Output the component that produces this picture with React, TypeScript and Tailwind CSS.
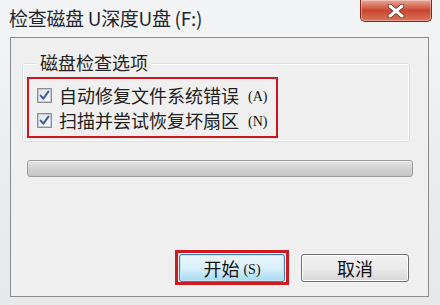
import React from "react";

const Check = () => (
  <div className="w-[15px] h-[15px] border border-[#8e8f8f] bg-gradient-to-br from-[#dcdcdc] to-[#f8f8f8] flex items-center justify-center shrink-0">
    <div className="w-[13px] h-[13px] border border-[#c4c8d0] bg-gradient-to-br from-[#e2e4ec] to-[#fbfbfd] flex items-center justify-center">
      <svg width="11" height="11" viewBox="0 0 11 11">
        <path d="M1.6 5.6 L4.3 8.7 L9.4 1.6" fill="none" stroke="#3e5b9c" strokeWidth="2" strokeLinecap="round" strokeLinejoin="round" />
      </svg>
    </div>
  </div>
);

export default function App() {
  const cjk = { fontFamily: '"Noto Sans CJK SC", "Noto Sans", sans-serif' };
  const serif = { fontFamily: '"Liberation Serif", "DejaVu Serif", serif' };
  return (
    <div
      className="w-[440px] h-[305px] overflow-hidden flex flex-col bg-gradient-to-b from-[#f4f5f6] via-[#ebedef] to-[#e6e8ea] text-[#1a1a1a]"
      style={cjk}
    >
      {/* title bar */}
      <div className="h-[37px] flex items-start justify-between">
        <div className="pl-[9px] pt-[7px] text-[19px] leading-[22px] text-[#1e2530] tracking-[-0.3px]">
          检查磁盘 U深度U盘 (F:)
        </div>
        <div className="mr-[8px] w-[72px] h-[22px] rounded-b-[5px] border border-t-0 border-[#7a2a1c] bg-gradient-to-b from-[#e9a596] via-[#c9452e] to-[#d9745b] flex items-center justify-center shadow-[inset_0_0_0_1px_rgba(255,255,255,0.35)]">
          <svg width="18" height="14" viewBox="0 0 18 14">
            <path d="M3 2 L15 12 M15 2 L3 12" stroke="#6b2a20" strokeWidth="4.6" strokeLinecap="round" />
            <path d="M3 2 L15 12 M15 2 L3 12" stroke="#ffffff" strokeWidth="3" strokeLinecap="round" />
          </svg>
        </div>
      </div>

      {/* client panel */}
      <div className="ml-[10px] mr-[11px] h-[260px] border border-[#8b8b8b] bg-[#f0f0f0] flex flex-col">
        {/* group box */}
        <div className="relative ml-[11px] mr-[18px] mt-[25px] h-[79px] rounded-[3px] border border-[#d5dfe5] shadow-[inset_0_0_0_1px_#ffffff]">
          <div className="absolute left-[13px] top-[-13px] px-[4px] bg-[#f0f0f0] text-[18px] leading-[22px] text-[#222]">
            磁盘检查选项
          </div>
          <div className="ml-[4px] mt-[13px] w-[251px] h-[61px] border-2 border-[#d0171f] flex flex-col justify-center gap-[7px] pl-[8px]">
            <div className="flex items-center gap-[7px] h-[18px]">
              <Check />
              <span className="text-[18px] leading-[18px] text-[#202020]">自动修复文件系统错误</span>
              <span className="text-[14px] leading-[18px] ml-[2px] text-[#111] translate-y-[2px]" style={serif}>(A)</span>
            </div>
            <div className="flex items-center gap-[7px] h-[18px]">
              <Check />
              <span className="text-[18px] leading-[18px] text-[#202020]">扫描并尝试恢复坏扇区</span>
              <span className="text-[14px] leading-[18px] ml-[2px] text-[#111] translate-y-[2px]" style={serif}>(N)</span>
            </div>
          </div>
        </div>

        {/* progress bar */}
        <div className="ml-[16px] mr-[15px] mt-[18px] h-[17px] rounded-[3px] border border-[#9c9c9c] bg-gradient-to-b from-[#e6e6e6] via-[#d2d2d2] to-[#c6c6c6] shadow-[inset_0_1px_0_#f4f4f4]" />

        {/* buttons */}
        <div className="mt-auto mb-[11px] flex items-center justify-end pr-[19px] gap-[12px]">
          <div className="w-[114px] h-[35px] border-[3px] border-[#cf1a20] flex items-center justify-center">
            <div className="w-[106px] h-[28px] rounded-[3px] border border-[#3c7fb1] bg-gradient-to-b from-[#eaf6fd] via-[#d9f0fc] to-[#a7d9f5] flex items-center justify-center shadow-[inset_0_0_0_1px_#bfe6fb]">
              <span className="text-[18px] leading-[20px] text-[#111]">开始</span>
              <span className="text-[14px] leading-[20px] ml-[4px] text-[#111] translate-y-[2px]" style={serif}>(S)</span>
            </div>
          </div>
          <div className="w-[108px] h-[28px] rounded-[3px] border border-[#707070] bg-gradient-to-b from-[#f2f2f2] via-[#ebebeb] to-[#d6d6d6] flex items-center justify-center shadow-[inset_0_0_0_1px_#fcfcfc]">
            <span className="text-[18px] leading-[20px] text-[#111]">取消</span>
          </div>
        </div>
      </div>
    </div>
  );
}
